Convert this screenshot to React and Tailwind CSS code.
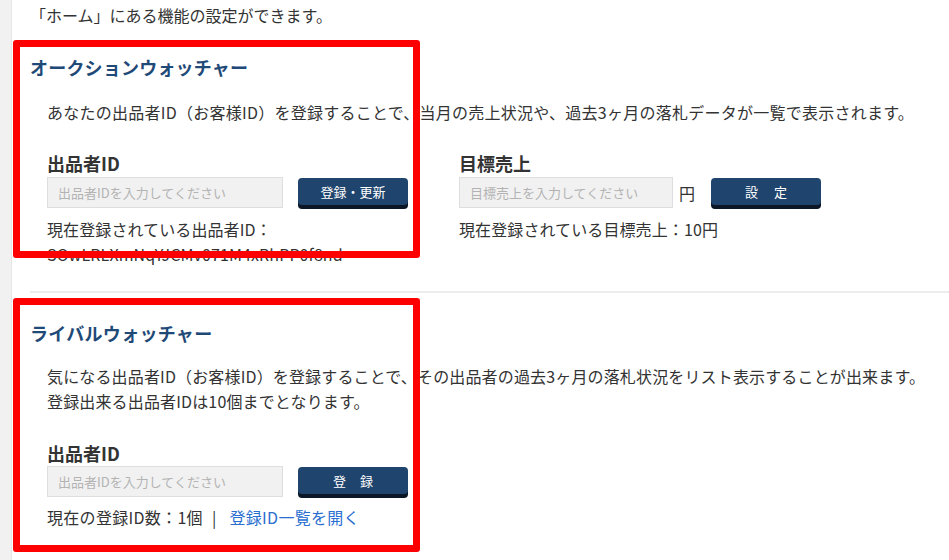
import React from "react";

const FONT = { fontFamily: '"Noto Sans CJK JP", "Noto Sans", sans-serif' };

function Btn({ children, className = "" }) {
  return (
    <button
      type="button"
      className={`mt-[1px] flex h-[27px] w-[110px] shrink-0 items-center justify-center rounded-[4px] bg-[#1f446d] text-[13px] leading-none text-white shadow-[0_4px_0_#0b1727] ${className}`}
    >
      {children}
    </button>
  );
}

function Input({ placeholder, w }) {
  return (
    <input
      type="text"
      placeholder={placeholder}
      className={`${w} h-[31px] shrink-0 border border-[#dedede] bg-[#f1f1f1] pl-[10px] text-[13px] text-[#333] outline-none placeholder:text-[#b3b3b3]`}
      style={FONT}
    />
  );
}

export default function App() {
  return (
    <div className="relative flex h-[560px] w-[949px] overflow-hidden bg-white text-[#333]" style={FONT}>
      <div className="w-[12px] shrink-0 border-r border-[#e6e6e6] bg-[#f1f1f1]" />
      <div className="flex min-w-0 flex-1 flex-col pl-[18px]">
        <p className="mt-[3px] text-[16px] leading-[24px]">「ホーム」にある機能の設定ができます。</p>

        {/* Auction watcher */}
        <h2 className="mt-[27px] text-[18px] font-bold leading-[26px] tracking-[0.2px] text-[#1f4a78]">オークションウォッチャー</h2>
        <div className="pl-[17px]">
          <p className="mt-[20px] whitespace-nowrap text-[16px] leading-[24px] tracking-[0.25px]">
            あなたの出品者ID（お客様ID）を登録することで、当月の売上状況や、過去3ヶ月の落札データが一覧で表示されます。
          </p>
          <div className="mt-[26px] flex">
            <div className="w-[412px] shrink-0">
              <div className="text-[18px] font-bold leading-[26px]">出品者ID</div>
              <div className="mt-[1px] flex items-start gap-[15px]">
                <Input placeholder="出品者IDを入力してください" w="w-[236px]" />
                <Btn>登録・更新</Btn>
              </div>
              <p className="mt-[9px] text-[16px] leading-[25px] tracking-[0.1px]">
                現在登録されている出品者ID：
                <br />
                SOwLRLXmNqYJCMv071M4xRhPP0f8nd
              </p>
            </div>
            <div className="flex-1">
              <div className="text-[18px] font-bold leading-[26px]">目標売上</div>
              <div className="mt-[1px] flex items-start">
                <Input placeholder="目標売上を入力してください" w="w-[214px]" />
                <span className="ml-[6px] mt-[4px] text-[16px] leading-[24px]">円</span>
                <Btn className="ml-[16px] gap-[16px]">
                  <span>設</span>
                  <span>定</span>
                </Btn>
              </div>
              <p className="mt-[9px] text-[16px] leading-[25px] tracking-[0.1px]">現在登録されている目標売上：10円</p>
            </div>
          </div>
        </div>

        <div className="mt-[24px] h-[2px] bg-[#ececec]" />

        {/* Rival watcher */}
        <h2 className="mt-[27px] text-[18px] font-bold leading-[26px] tracking-[0.3px] text-[#1f4a78]">ライバルウォッチャー</h2>
        <div className="pl-[17px]">
          <p className="mt-[18px] whitespace-nowrap text-[16px] leading-[25px] tracking-[0.15px]">
            気になる出品者ID（お客様ID）を登録することで、その出品者の過去3ヶ月の落札状況をリスト表示することが出来ます。
            <br />
            登録出来る出品者IDは10個までとなります。
          </p>
          <div className="mt-[26px] text-[18px] font-bold leading-[26px]">出品者ID</div>
          <div className="flex items-start gap-[15px]">
            <Input placeholder="出品者IDを入力してください" w="w-[236px]" />
            <Btn className="gap-[14px]">
              <span>登</span>
              <span>録</span>
            </Btn>
          </div>
          <p className="mt-[8px] text-[16px] leading-[24px] tracking-[0.3px]">
            現在の登録ID数：1個<span className="ml-[9px] mr-[13px] text-[#333]">|</span>
            <a href="#" className="text-[#2a6ecf]">登録ID一覧を開く</a>
          </p>
        </div>
      </div>

      {/* annotation boxes */}
      <div className="pointer-events-none absolute left-[13px] top-[40px] h-[218px] w-[407px] rounded-[3px] border-[7px] border-[#ff0000]" />
      <div className="pointer-events-none absolute left-[13px] top-[298px] h-[254px] w-[407px] rounded-[3px] border-[7px] border-[#ff0000]" />
    </div>
  );
}
